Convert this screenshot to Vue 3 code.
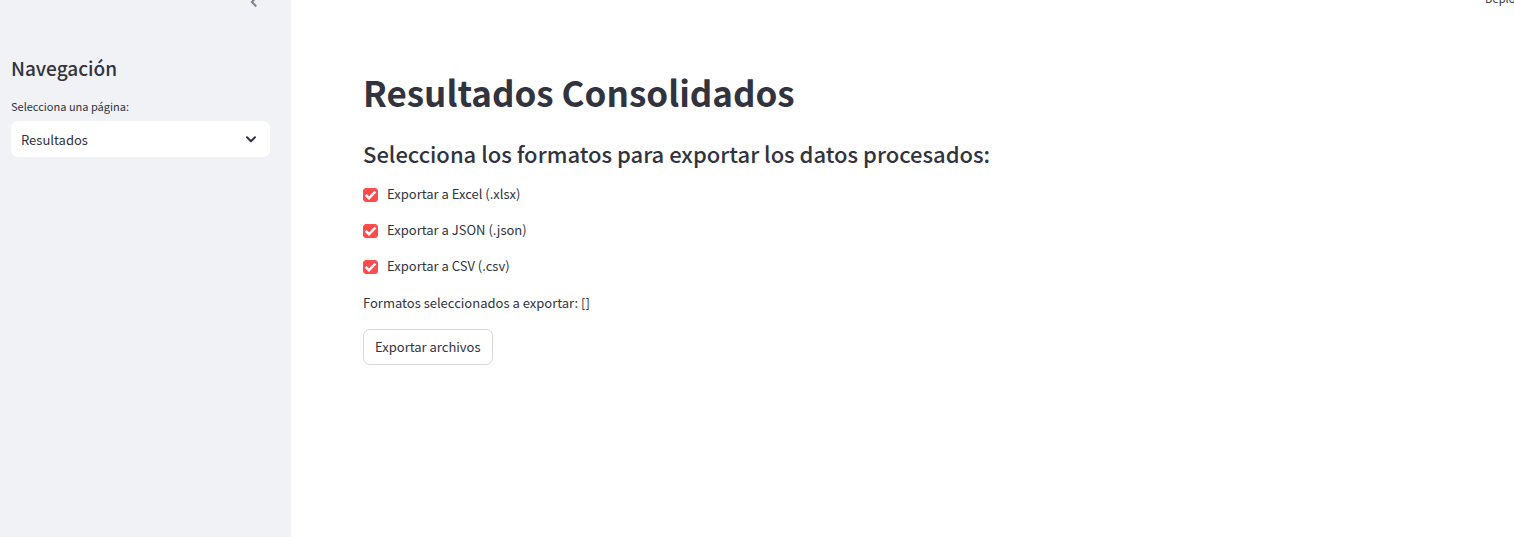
<script setup>
import { ref } from 'vue'

const page = ref('Resultados')
const pages = ['Resultados']
const formats = ref([
  { id: 'xlsx', label: 'Exportar a Excel (.xlsx)', checked: true },
  { id: 'json', label: 'Exportar a JSON (.json)', checked: true },
  { id: 'csv', label: 'Exportar a CSV (.csv)', checked: true },
])
</script>

<template>
  <div class="app">
    <aside class="sidebar">
      <button class="collapse" type="button" aria-label="Cerrar barra lateral">
        <svg viewBox="0 0 24 24" width="20" height="20"><path d="M15.6 7.4 14 5.8l-6.2 6.2 6.2 6.2 1.6-1.6L11 12z" fill="#7c7f8c" /></svg>
      </button>
      <h2 class="nav-title">Navegación</h2>
      <label class="nav-label" for="page">Selecciona una página:</label>
      <div class="select">
        <select id="page" v-model="page">
          <option v-for="p in pages" :key="p">{{ p }}</option>
        </select>
        <svg class="chevron" viewBox="0 0 10 7" width="10" height="7"><path d="M1 1.2 5 5.2 9 1.2" fill="none" stroke="#31333f" stroke-width="2" stroke-linecap="round" stroke-linejoin="round" /></svg>
      </div>
    </aside>

    <main class="main">
      <div class="toolbar"><button class="deploy" type="button">Deploy</button></div>
      <h1 class="title">Resultados Consolidados</h1>
      <h3 class="subtitle">Selecciona los formatos para exportar los datos procesados:</h3>
      <div class="formats">
        <label v-for="f in formats" :key="f.id" class="format" :for="f.id">
          <span class="box">
            <input :id="f.id" v-model="f.checked" type="checkbox" />
            <svg v-if="f.checked" viewBox="0 0 15 14" width="15" height="14"><path d="M2.6 6.8 6 10.2 12.4 3.6" fill="none" stroke="#fff" stroke-width="2.4" /></svg>
          </span>
          <span>{{ f.label }}</span>
        </label>
      </div>
      <p class="summary">Formatos seleccionados a exportar: []</p>
      <button class="export" type="button">Exportar archivos</button>
    </main>
  </div>
</template>

<style>
body {
  margin: 0;
  background: #fff;
}
</style>

<style scoped>
.app {
  display: flex;
  min-height: 100vh;
  overflow: hidden;
  color: #31333f;
  font-family: "Noto Sans CJK SC", "Noto Sans", sans-serif;
  font-size: 13px;
  line-height: 20px;
}
button,
select,
input {
  margin: 0;
  color: inherit;
  font: inherit;
}
.sidebar {
  display: flex;
  flex: 0 0 291px;
  flex-direction: column;
  box-sizing: border-box;
  padding: 0 21px 0 11px;
  background: #f0f2f6;
}
.collapse {
  display: flex;
  align-self: flex-end;
  margin: -8px 6px 0 0;
  padding: 0;
  border: 0;
  background: none;
}
.nav-title {
  margin: 43px 0 0;
  font-size: 19px;
  font-weight: 500;
  line-height: 26px;
}
.nav-label {
  margin-top: 15px;
  font-size: 11px;
}
.select {
  display: grid;
  align-items: center;
  margin-top: 5px;
}
.select select,
.chevron {
  grid-area: 1 / 1;
}
.select select {
  width: 100%;
  height: 36px;
  padding: 2px 32px 0 10px;
  border: 0;
  border-radius: 7px;
  background: #fff;
  appearance: none;
}
.chevron {
  justify-self: end;
  margin-right: 14px;
  pointer-events: none;
}
.main {
  position: relative;
  flex: 1;
  min-width: 0;
  padding: 66px 72px 40px;
}
.toolbar {
  position: absolute;
  top: -12px;
  right: -7px;
}
.deploy {
  padding: 0;
  border: 0;
  background: none;
  font-size: 11px;
}
.title {
  margin: 0;
  font-size: 35px;
  font-weight: 700;
  line-height: 52px;
}
.subtitle {
  margin: 20px 0 0;
  font-size: 22px;
  font-weight: 500;
  line-height: 30px;
}
.formats {
  display: flex;
  flex-direction: column;
  align-items: flex-start;
  gap: 16px;
  margin-top: 16px;
}
.format {
  display: flex;
  align-items: center;
  gap: 9px;
}
.box {
  display: grid;
  padding-top: 2px;
}
.box input,
.box svg {
  grid-area: 1 / 1;
}
.box input {
  width: 15px;
  height: 14px;
  border: 1px solid #a3a8b8;
  border-radius: 3px;
  appearance: none;
}
.box input:checked {
  border-color: #ff4b4b;
  background: #ff4b4b;
}
.box svg {
  pointer-events: none;
}
.summary {
  margin: 17px 0 16px;
}
.export {
  height: 36px;
  padding: 0 11px;
  border: 1px solid #d6d6d9;
  border-radius: 7px;
  background: #fff;
}
</style>
